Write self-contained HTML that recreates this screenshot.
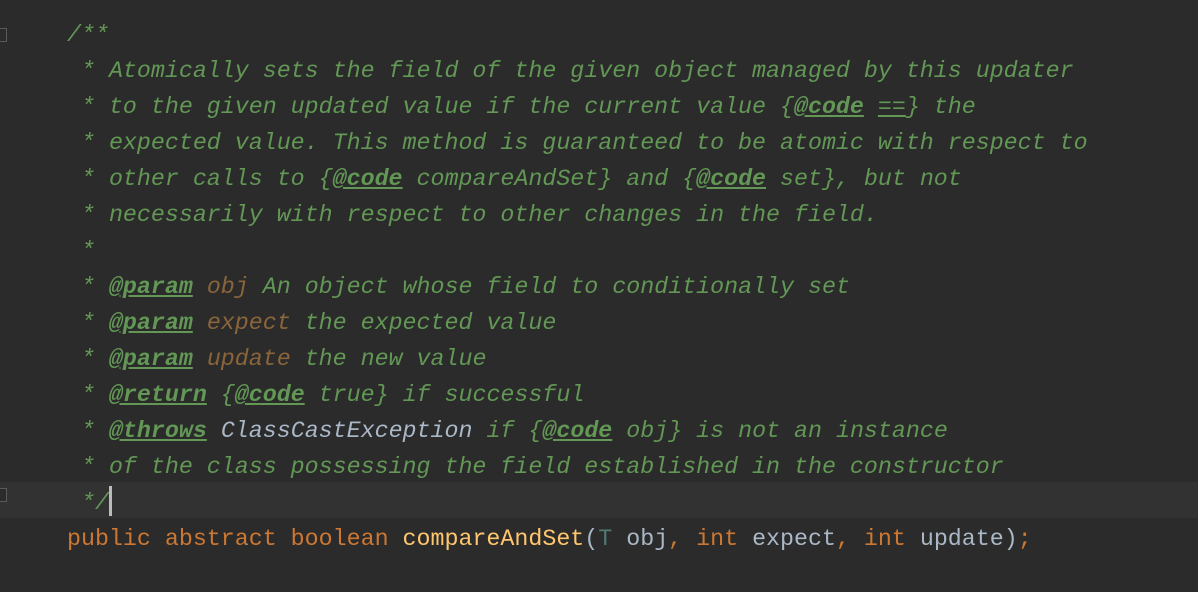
<!DOCTYPE html>
<html><head><meta charset="utf-8"><style>
html,body{margin:0;padding:0;background:#2b2b2b;width:1198px;height:592px;overflow:hidden}
.hl{position:absolute;left:0;top:482px;width:1198px;height:36px;background:#323232}
pre{position:absolute;left:67px;top:17px;margin:0;font-family:"Liberation Mono",monospace;font-size:23.3px;line-height:36px;color:#a9b7c6}
.c{color:#629755;font-style:italic}
.t{color:#629755;font-style:italic;font-weight:bold;text-decoration:underline}
.p{color:#8a653b;font-style:italic}
.g{color:#a9b7c6;font-style:italic}
.k{color:#cc7832}
.f{color:#ffc66d}
.ty{color:#507874}
.cur{display:inline-block;width:3px;height:30px;background:#bbbbbb;vertical-align:-7px}
.fold{position:absolute;left:0;width:6px;height:12px;border:1px solid #5a5a5a;border-left:none;background:#2b2b2b}
</style></head><body>
<div class="hl"></div>
<div class="fold" style="top:28px"></div>
<div class="fold" style="top:488px"></div>
<pre><span class="c">/**</span>
<span class="c"> * Atomically sets the field of the given object managed by this updater</span>
<span class="c"> * to the given updated value if the current value {<span class="t">@code</span> <u>==</u>} the</span>
<span class="c"> * expected value. This method is guaranteed to be atomic with respect to</span>
<span class="c"> * other calls to {<span class="t">@code</span> compareAndSet} and {<span class="t">@code</span> set}, but not</span>
<span class="c"> * necessarily with respect to other changes in the field.</span>
<span class="c"> *</span>
<span class="c"> * <span class="t">@param</span> <span class="p">obj</span> An object whose field to conditionally set</span>
<span class="c"> * <span class="t">@param</span> <span class="p">expect</span> the expected value</span>
<span class="c"> * <span class="t">@param</span> <span class="p">update</span> the new value</span>
<span class="c"> * <span class="t">@return</span> {<span class="t">@code</span> true} if successful</span>
<span class="c"> * <span class="t">@throws</span> <span class="g">ClassCastException</span> if {<span class="t">@code</span> obj} is not an instance</span>
<span class="c"> * of the class possessing the field established in the constructor</span>
<span class="c"> */</span><span class="cur"></span>
<span class="k">public abstract boolean </span><span class="f">compareAndSet</span>(<span class="ty">T</span> obj<span class="k">, int </span>expect<span class="k">, int </span>update)<span class="k">;</span></pre>
</body></html>
